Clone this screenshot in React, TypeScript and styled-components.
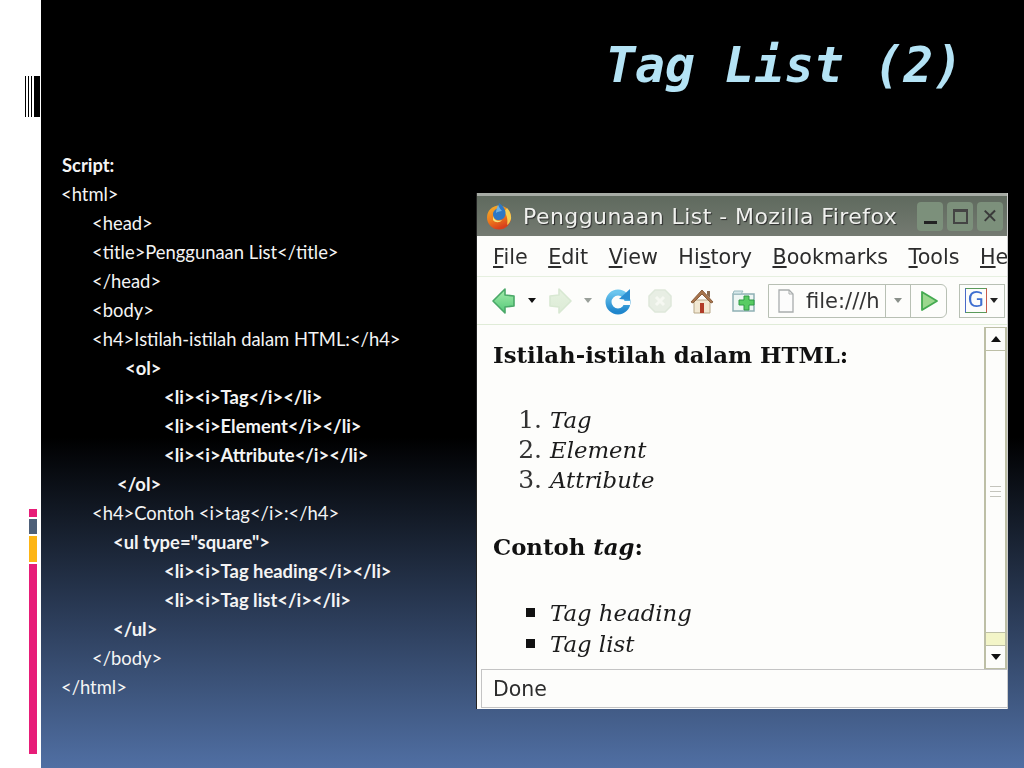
import styled, {createGlobalStyle} from 'styled-components';

const GlobalStyle = createGlobalStyle`
  html, body {
    margin: 0;
    padding: 0;
    background: #000;
  }
`;

const codeLines: {text: string; indent: number; bold?: boolean}[] = [
  {text: 'Script:', indent: 1, bold: true},
  {text: '<html>', indent: 0},
  {text: '<head>', indent: 31},
  {text: '<title>Penggunaan List</title>', indent: 31},
  {text: '</head>', indent: 31},
  {text: '<body>', indent: 31},
  {text: '<h4>Istilah-istilah dalam HTML:</h4>', indent: 31},
  {text: '<ol>', indent: 64, bold: true},
  {text: '<li><i>Tag</i></li>', indent: 103, bold: true},
  {text: '<li><i>Element</i></li>', indent: 103, bold: true},
  {text: '<li><i>Attribute</i></li>', indent: 103, bold: true},
  {text: '</ol>', indent: 56, bold: true},
  {text: '<h4>Contoh <i>tag</i>:</h4>', indent: 31},
  {text: '<ul type="square">', indent: 52, bold: true},
  {text: '<li><i>Tag heading</i></li>', indent: 103, bold: true},
  {text: '<li><i>Tag list</i></li>', indent: 103, bold: true},
  {text: '</ul>', indent: 52, bold: true},
  {text: '</body>', indent: 31},
  {text: '</html>', indent: 0},
];

const menuItems = [
  {key: 'F', rest: 'ile'},
  {key: 'E', rest: 'dit'},
  {key: 'V', rest: 'iew'},
  {lead: 'Hi', key: 's', rest: 'tory'},
  {key: 'B', rest: 'ookmarks'},
  {key: 'T', rest: 'ools'},
  {key: 'H', rest: 'e'},
];

function FirefoxIcon() {
  return (
    <svg width="26" height="28" viewBox="0 0 26 28">
      <defs>
        <linearGradient id="foxBody" x1="0" y1="0" x2="0.4" y2="1">
          <stop offset="0" stopColor="#f7b52c" />
          <stop offset="0.6" stopColor="#ee7a1c" />
          <stop offset="1" stopColor="#d8401c" />
        </linearGradient>
      </defs>
      <circle cx="13" cy="15.5" r="12" fill="url(#foxBody)" />
      <path d="M21 6c3 3 4.500 7 4 11-1 3-2 5-4 6 1-5 0-10-3-13z" fill="#f8cf52" />
      <path d="M13 1c3 2 6 5 6.500 9 .5 5-2.500 8-6.500 8s-6-2-6-6c0-3 3-5 5-6z" fill="#2f78c4" />
      <path d="M12 3c1 2 2 4 4 6-2 0-5 1-6 2 0-3 1-5 2-8z" fill="#6db2e6" />
      <path d="M7 14c1 4 5 6 9 4-2 3-7 3-9 0z" fill="#f3e27a" />
    </svg>
  );
}

function ArrowIcon({dir, faded}: {dir: 'left' | 'right'; faded?: boolean}) {
  const id = faded ? 'arrowFaded' : 'arrowActive';
  return (
    <svg width="26" height="28" viewBox="0 0 26 28">
      <defs>
        <linearGradient id={id} x1="0" y1="0" x2="0" y2="1">
          <stop offset="0" stopColor={faded ? '#e6f2e0' : '#a6ecac'} />
          <stop offset="1" stopColor={faded ? '#dcebd6' : '#54c878'} />
        </linearGradient>
      </defs>
      <path
        d={dir === 'left' ? 'M2 14 14 2v6l9 1v10l-9 1v6z' : 'M24 14 12 2v6l-9 1v10l9 1v6z'}
        fill={`url(#${id})`}
        stroke={faded ? '#d8e8d2' : '#4aa868'}
        strokeWidth="1.6"
        strokeLinejoin="round"
      />
    </svg>
  );
}

function ReloadIcon() {
  return (
    <svg width="26" height="28" viewBox="0 0 26 28">
      <defs>
        <linearGradient id="reloadBlue" x1="0" y1="0" x2="0" y2="1">
          <stop offset="0" stopColor="#6cc6ee" />
          <stop offset="1" stopColor="#1f86cc" />
        </linearGradient>
      </defs>
      <circle cx="13" cy="15" r="9.500" fill="none" stroke="url(#reloadBlue)" strokeWidth="6" />
      <path d="M14 14h11v4H14z" fill="#fdfdfb" />
      <path d="M25 2v11l-11-1z" fill="#2c8fd2" />
    </svg>
  );
}

function StopIcon() {
  return (
    <svg width="26" height="26" viewBox="0 0 26 26">
      <path d="M8 2h10l6 6v10l-6 6H8l-6-6V8z" fill="#e8eee4" stroke="#dee8da" strokeWidth="1.500" />
      <path d="M9 9l8 8M17 9l-8 8" stroke="#f6f8f2" strokeWidth="3" />
    </svg>
  );
}

function HomeIcon() {
  return (
    <svg width="26" height="28" viewBox="0 0 26 28">
      <path d="M5 13h16v13H5z" fill="#f2e8d2" stroke="#b8a888" />
      <path d="M2 15 13 3l11 12-2 1-9-9-9 9z" fill="#a8744c" stroke="#8a5f3e" strokeWidth="1" />
      <path d="M18 4h3v7l-3-3z" fill="#8a6a50" />
      <path d="M11 16h4v10h-4z" fill="#b03c28" />
    </svg>
  );
}

function NewTabIcon() {
  return (
    <svg width="26" height="26" viewBox="0 0 26 26">
      <path d="M2 6h21v17H2z" fill="#eef6f4" stroke="#8fb0b4" strokeWidth="1.500" />
      <path d="M2 6h8l2-3H3z" fill="#d6e8ea" stroke="#9cbcc0" />
      <path d="M13 8h5v4h5v5h-5v5h-5v-5H8v-5h5z" fill="#58cc62" stroke="#2f9a44" />
    </svg>
  );
}

function FileIcon() {
  return (
    <svg width="18" height="24" viewBox="0 0 18 24">
      <path d="M2 1h10l4 4v18H2z" fill="#fcfcfc" stroke="#a9adad" strokeWidth="1.300" />
      <path d="M12 1v4h4" fill="none" stroke="#a9adad" />
    </svg>
  );
}

function GoIcon() {
  return (
    <svg width="20" height="24" viewBox="0 0 20 24">
      <path d="M3 3l15 9-15 9z" fill="#9bd88e" stroke="#44aa50" strokeWidth="1.800" strokeLinejoin="round" />
    </svg>
  );
}

export default function App() {
  return (
    <>
      <GlobalStyle />
      <Slide>
        <Sidebar>
          <Barcode>
            <BarcodeLine $width={1} />
            <BarcodeLine $width={1} />
            <BarcodeLine $width={1} />
            <BarcodeLine $width={6} />
          </Barcode>
          <ColorBars>
            <ColorBar $height={8} $color="#e71d78" />
            <ColorBar $height={15} $color="#4e6079" />
            <ColorBar $height={26} $color="#fdb515" />
            <ColorBar $height={190} $color="#e71d78" />
          </ColorBars>
        </Sidebar>
        <Main>
          <Title>Tag List (2)</Title>
          <ContentRow>
            <CodeList>
              {codeLines.map((line, idx) => (
                <CodeLine key={idx} $indent={line.indent} $bold={line.bold}>
                  {line.text}
                </CodeLine>
              ))}
            </CodeList>
            <Browser>
              <TitleBar>
                <FirefoxIcon />
                <WindowTitle>Penggunaan List - Mozilla Firefox</WindowTitle>
                <WindowButtons>
                  <WindowButton>
                    <MinimizeGlyph />
                  </WindowButton>
                  <WindowButton>
                    <MaximizeGlyph />
                  </WindowButton>
                  <WindowButton>✕</WindowButton>
                </WindowButtons>
              </TitleBar>
              <MenuBar>
                {menuItems.map((item, idx) => (
                  <span key={idx}>
                    {item.lead}
                    <u>{item.key}</u>
                    {item.rest}
                  </span>
                ))}
              </MenuBar>
              <Toolbar>
                <ArrowIcon dir="left" />
                <DropCaret $color="#111" />
                <ArrowIcon dir="right" faded />
                <DropCaret $color="#9aa09a" />
                <NavIcons>
                  <ReloadIcon />
                  <StopIcon />
                  <HomeIcon />
                  <NewTabIcon />
                </NavIcons>
                <UrlBox>
                  <UrlField>
                    <FileIcon />
                    <span>file:///h</span>
                  </UrlField>
                  <UrlDrop>
                    <DropCaret $color="#8a908a" />
                  </UrlDrop>
                  <UrlGo>
                    <GoIcon />
                  </UrlGo>
                </UrlBox>
                <SearchBox>
                  <GoogleMark>G</GoogleMark>
                  <DropCaret $color="#222" />
                </SearchBox>
              </Toolbar>
              <PageArea>
                <Page>
                  <PageHeading>Istilah-istilah dalam HTML:</PageHeading>
                  <OrderedList>
                    <li>Tag</li>
                    <li>Element</li>
                    <li>Attribute</li>
                  </OrderedList>
                  <PageHeading>
                    Contoh <i>tag</i>:
                  </PageHeading>
                  <SquareList>
                    <li>Tag heading</li>
                    <li>Tag list</li>
                  </SquareList>
                </Page>
                <Scrollbar>
                  <ScrollButton>
                    <ScrollArrow $up />
                  </ScrollButton>
                  <ScrollTrack>
                    <ScrollGrip />
                  </ScrollTrack>
                  <ScrollRest />
                  <ScrollButton>
                    <ScrollArrow />
                  </ScrollButton>
                </Scrollbar>
              </PageArea>
              <StatusBar>Done</StatusBar>
            </Browser>
          </ContentRow>
        </Main>
      </Slide>
    </>
  );
}

const Slide = styled.div`
  display: flex;
  width: 1024px;
  height: 768px;
  overflow: hidden;
`;

const Sidebar = styled.aside`
  flex: 0 0 41px;
  box-sizing: border-box;
  display: flex;
  flex-direction: column;
  align-items: flex-end;
  height: 768px;
  padding: 76px 1px 0 0;
  background: #fff;
`;

const Barcode = styled.div`
  display: flex;
  gap: 2px;
  height: 41px;
`;

const BarcodeLine = styled.div<{$width: number}>`
  width: ${p => p.$width}px;
  background: #000;
`;

const ColorBars = styled.div`
  display: flex;
  flex-direction: column;
  gap: 2px;
  width: 8px;
  margin: 392px 3px 0 0;
`;

const ColorBar = styled.div<{$height: number; $color: string}>`
  height: ${p => p.$height}px;
  background: ${p => p.$color};
`;

const Main = styled.main`
  flex: 1;
  box-sizing: border-box;
  padding: 0 16px 0 20px;
  background: linear-gradient(#000 0, #000 57%, #506fa3 100%);
`;

const Title = styled.h1`
  margin: 0;
  padding: 35px 45px 0 0;
  height: 151px;
  box-sizing: border-box;
  text-align: right;
  font: italic bold 49.500px/60px 'DejaVu Sans Mono', monospace;
  color: #b4e3f5;
`;

const ContentRow = styled.div`
  display: flex;
  justify-content: space-between;
  align-items: flex-start;
`;

const CodeList = styled.div`
  font-family: 'Lato', sans-serif;
  font-size: 18.400px;
  line-height: 29px;
  color: #f4f4f4;
`;

const CodeLine = styled.div<{$indent: number; $bold?: boolean}>`
  padding-left: ${p => p.$indent}px;
  font-weight: ${p => (p.$bold ? 700 : 400)};
  white-space: pre;
`;

const Browser = styled.section`
  width: 532px;
  height: 516px;
  margin-top: 42px;
  box-sizing: border-box;
  display: flex;
  flex-direction: column;
  overflow: hidden;
  background: #fdfdfb;
  border-left: 1px solid #222;
  border-right: 1px solid #ccc;
  font-family: 'DejaVu Sans', sans-serif;
  filter: blur(0.45px);
`;

const TitleBar = styled.div`
  flex: 0 0 43px;
  box-sizing: border-box;
  display: flex;
  align-items: center;
  gap: 11px;
  padding: 0 4px 0 9px;
  border-top: 3px solid #a7aca5;
  background: linear-gradient(#5f6a5e, #747a71);
`;

const WindowTitle = styled.div`
  flex: 1;
  font-size: 22px;
  letter-spacing: 0.440px;
  color: #f0f1ee;
  white-space: nowrap;
  text-shadow: 1px 1px 1px #2a2a2a;
`;

const WindowButtons = styled.div`
  display: flex;
  gap: 4px;
`;

const WindowButton = styled.div`
  width: 26px;
  height: 29px;
  display: flex;
  align-items: center;
  justify-content: center;
  border-radius: 4px;
  background: #7c907b;
  color: #3a3a3a;
  font-size: 20px;
  font-weight: 700;
`;

const MinimizeGlyph = styled.div`
  width: 13px;
  height: 3px;
  margin-top: 13px;
  background: #222;
`;

const MaximizeGlyph = styled.div`
  width: 11px;
  height: 10px;
  border: 2px solid #444;
  border-top-width: 3px;
`;

const MenuBar = styled.div`
  flex: 0 0 41px;
  box-sizing: border-box;
  display: flex;
  align-items: center;
  gap: 20.500px;
  padding: 2px 0 0 16px;
  overflow: hidden;
  border-bottom: 1px solid #e6f0e0;
  font-size: 20.700px;
  color: #2c2c2c;
  white-space: nowrap;
`;

const Toolbar = styled.div`
  flex: 0 0 48px;
  box-sizing: border-box;
  display: flex;
  align-items: center;
  gap: 11px;
  padding: 0 0 0 14px;
  border-bottom: 1px solid #e0ecd8;
`;

const NavIcons = styled.div`
  display: flex;
  align-items: center;
  gap: 16px;
  margin-left: 2px;
`;

const DropCaret = styled.div<{$color: string}>`
  width: 0;
  height: 0;
  border-left: 4px solid transparent;
  border-right: 4px solid transparent;
  border-top: 5px solid ${p => p.$color};
`;

const UrlBox = styled.div`
  flex: 0 0 179px;
  height: 34px;
  display: flex;
  box-sizing: border-box;
  border: 1px solid #b8c0b4;
  border-radius: 0 6px 6px 0;
`;

const UrlField = styled.div`
  flex: 1;
  display: flex;
  align-items: center;
  gap: 11px;
  padding-left: 8px;
  font-size: 21px;
  color: #333;
  white-space: nowrap;
`;

const UrlDrop = styled.div`
  flex: 0 0 24px;
  display: flex;
  align-items: center;
  justify-content: center;
  border-left: 1px solid #b8c0b4;
`;

const UrlGo = styled.div`
  flex: 0 0 35px;
  display: flex;
  align-items: center;
  justify-content: center;
  border-left: 1px solid #b8c0b4;
`;

const SearchBox = styled.div`
  flex: 0 0 46px;
  height: 34px;
  display: flex;
  align-items: center;
  gap: 3px;
  margin-left: 1px;
  padding-left: 5px;
  box-sizing: border-box;
  border: 1px solid #b8c0b4;
`;

const GoogleMark = styled.div`
  width: 22px;
  height: 25px;
  box-sizing: border-box;
  border: 1px solid #5a9a5a;
  border-left-color: #4a6ac8;
  border-right-color: #c85a4a;
  font-size: 21px;
  line-height: 23px;
  text-align: center;
  color: #3f6fd0;
`;

const PageArea = styled.div`
  flex: 0 0 344px;
  display: flex;
  min-height: 0;
`;

const Page = styled.div`
  flex: 1;
  padding: 15px 0 0 16px;
  font-family: 'DejaVu Serif', serif;
  color: #1c1c1c;
`;

const PageHeading = styled.h4`
  margin: 0;
  font-size: 22.800px;
  line-height: 30px;
  font-weight: 700;
  color: #111;
`;

const OrderedList = styled.ol`
  margin: 35px 0 37px;
  padding-left: 57px;
  font-size: 22.800px;
  line-height: 30px;
  font-style: italic;

  li::marker {
    font-style: normal;
    font-size: 25px;
    color: #333;
  }
`;

const SquareList = styled.ul`
  list-style: square;
  margin: 35px 0 0;
  padding-left: 57px;
  font-size: 22.800px;
  line-height: 30px;
  font-style: italic;

  li::marker {
    font-size: 28px;
    color: #111;
  }
`;

const Scrollbar = styled.div`
  flex: 0 0 23px;
  display: flex;
  flex-direction: column;
  margin: 2px 0 0;
  border-left: 2px solid #bdbfa6;
  border-right: 2px solid #bdbfa6;
  box-sizing: border-box;
`;

const ScrollButton = styled.div`
  flex: 0 0 22px;
  display: flex;
  align-items: center;
  justify-content: center;
  border: solid #bdbfa6;
  border-width: 1px 0;
  background: #fdfdfb;
`;

const ScrollArrow = styled.div<{$up?: boolean}>`
  width: 0;
  height: 0;
  border-left: 5px solid transparent;
  border-right: 5px solid transparent;
  ${p => (p.$up ? 'border-bottom: 6px solid #111;' : 'border-top: 6px solid #111;')}
`;

const ScrollTrack = styled.div`
  flex: 1;
  display: flex;
  align-items: center;
  justify-content: center;
  background: #fdfdfb;
`;

const ScrollGrip = styled.div`
  width: 11px;
  height: 9px;
  border-top: 1px solid #c4c4bc;
  border-bottom: 1px solid #c4c4bc;
  background: linear-gradient(transparent 40%, #c4c4bc 40%, #c4c4bc 60%, transparent 60%);
`;

const ScrollRest = styled.div`
  flex: 0 0 12px;
  border-top: 1px solid #bdbfa6;
  background: #f3f5c8;
`;

const StatusBar = styled.div`
  flex: 1;
  display: flex;
  align-items: center;
  margin: 0 0 1px 4px;
  padding-left: 11px;
  border: 1px solid #c4c4c4;
  border-right: none;
  font-size: 20.500px;
  color: #2c2c2c;
`;
